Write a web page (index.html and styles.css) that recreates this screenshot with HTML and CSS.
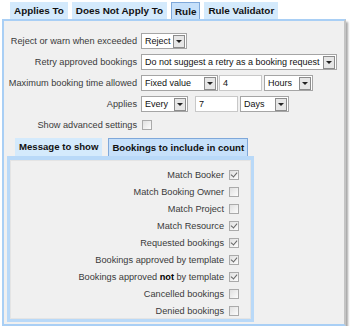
FILE: index.html
```html
<!DOCTYPE html>
<html lang="en">
<head>
    <meta charset="UTF-8">
    <title>Booking Rule</title>
    <link rel="stylesheet" href="styles.css">
</head>
<body>
    <div class="tabs">
        <span class="tab">Applies To</span>
        <span class="tab">Does Not Apply To</span>
        <span class="tab active">Rule</span>
        <span class="tab">Rule Validator</span>
    </div>

    <div class="panel">
        <div class="form">
            <label>Reject or warn when exceeded</label>
            <div class="field">
                <span class="select w-reject">Reject<span class="arrow"></span></span>
            </div>

            <label>Retry approved bookings</label>
            <div class="field">
                <span class="select w-retry">Do not suggest a retry as a booking request<span class="arrow"></span></span>
            </div>

            <label>Maximum booking time allowed</label>
            <div class="field">
                <span class="select w-fixed">Fixed value<span class="arrow"></span></span>
                <span class="text-input">4</span>
                <span class="select w-unit">Hours<span class="arrow"></span></span>
            </div>

            <label>Applies</label>
            <div class="field">
                <span class="select w-every">Every<span class="arrow"></span></span>
                <span class="text-input spaced">7</span>
                <span class="select w-unit">Days<span class="arrow"></span></span>
            </div>

            <label>Show advanced settings</label>
            <div class="field">
                <span class="check"></span>
            </div>
        </div>

        <div class="sub">
            <div class="tabs sub-tabs">
                <span class="tab">Message to show</span>
                <span class="tab active">Bookings to include in count</span>
            </div>
            <div class="sub-panel">
                <div class="checks">
                    <label>Match Booker</label><span class="check on"></span>
                    <label>Match Booking Owner</label><span class="check"></span>
                    <label>Match Project</label><span class="check"></span>
                    <label>Match Resource</label><span class="check on"></span>
                    <label>Requested bookings</label><span class="check on"></span>
                    <label>Bookings approved by template</label><span class="check on"></span>
                    <label>Bookings approved <b>not</b> by template</label><span class="check on"></span>
                    <label>Cancelled bookings</label><span class="check"></span>
                    <label>Denied bookings</label><span class="check"></span>
                </div>
            </div>
        </div>
    </div>
</body>
</html>
```

FILE: styles.css
```css
html, body {
    margin: 0;
    padding: 0;
    background: #fff;
    font-family: "Liberation Sans", Arial, sans-serif;
    color: #3a3a3a;
}
.tabs {
    display: flex;
    gap: 4px;
    padding: 2px 0 0 10px;
    height: 17px;
}
.tab {
    display: block;
    height: 17px;
    line-height: 17px;
    padding: 0 4px;
    background: #d4eafc;
    font-size: 9.9px;
    font-weight: bold;
    color: #111;
    white-space: nowrap;
}
.tab.active {
    background: #c6e0fa;
    border: 1px solid #7fa8da;
    border-bottom: none;
    height: 16px;
    line-height: 17px;
    padding: 0 3px;
}
.panel {
    margin-left: 2px;
    width: 340px;
    height: 303px;
    border: 2px solid #a9cff5;
    border-right-color: #c4c4c4;
    background: #f0f0f0;
    box-shadow: 2px 3px 2px #a8a8a8;
}
.form {
    display: grid;
    grid-template-columns: 133px auto;
    grid-auto-rows: 21px;
    column-gap: 4px;
    align-items: center;
    padding-top: 9px;
}
.form label {
    text-align: right;
    font-size: 9.2px;
    white-space: nowrap;
}
.field {
    display: flex;
    align-items: center;
}
.select {
    position: relative;
    display: block;
    box-sizing: border-box;
    height: 16px;
    line-height: 14px;
    padding-left: 3px;
    border: 1px solid #a5a5a5;
    background: #fff;
    font-size: 9px;
    color: #111;
    white-space: nowrap;
}
.arrow {
    position: absolute;
    right: 1px;
    top: 1px;
    width: 10px;
    height: 11px;
    border: 1px solid #8c8c8c;
    background: #e6e6e6;
}
.arrow::after {
    content: "";
    position: absolute;
    left: 2px;
    top: 4px;
    border-left: 3px solid transparent;
    border-right: 3px solid transparent;
    border-top: 3px solid #222;
}
.w-reject { width: 46px; }
.w-retry { width: 196px; }
.w-fixed { width: 77px; }
.w-every { width: 47px; }
.w-unit { width: 49px; }
.text-input {
    display: block;
    box-sizing: border-box;
    width: 43px;
    height: 16px;
    line-height: 14px;
    margin: 0 2px 0 1px;
    padding-left: 3px;
    border: 1px solid #c8c8c8;
    background: #fff;
    font-size: 9px;
    color: #111;
}
.text-input.spaced {
    margin-left: 7px;
}
.check {
    position: relative;
    display: block;
    box-sizing: border-box;
    width: 10px;
    height: 10px;
    margin-left: 1px;
    border: 1px solid #aaa;
    background: linear-gradient(135deg, #e0e0e0, #fcfcfc);
}
.check.on::after {
    content: "";
    position: absolute;
    left: 2px;
    top: 0px;
    width: 3px;
    height: 5px;
    border-right: 1.5px solid #666;
    border-bottom: 1.5px solid #666;
    transform: rotate(40deg);
}
.sub {
    margin: 3px 0 0 3px;
    width: 247px;
}
.sub-tabs {
    gap: 6px;
    padding: 0 0 0 8px;
    height: 18px;
}
.sub-tabs .tab {
    height: 18px;
    line-height: 18px;
    font-size: 9.6px;
}
.sub-tabs .tab.active {
    height: 17px;
}
.sub-panel {
    box-sizing: border-box;
    height: 166px;
    border: 3px solid #b9d9f8;
    border-top-width: 4px;
    background: #f0f0f0;
    box-shadow: inset 0 0 0 1px #e4e4e4;
    padding-top: 6px;
}
.checks {
    display: grid;
    grid-template-columns: 214px auto;
    grid-auto-rows: 17px;
    column-gap: 4px;
    align-items: center;
}
.checks label {
    text-align: right;
    font-size: 9.2px;
    white-space: nowrap;
}
.checks b {
    color: #000;
}
```
